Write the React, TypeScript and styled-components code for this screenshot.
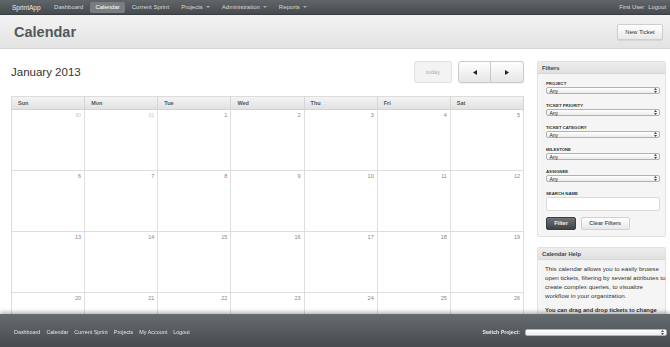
import React from "react";
import styled, { createGlobalStyle, css } from "styled-components";

const GlobalStyle = createGlobalStyle`
  html, body { margin: 0; padding: 0; }
  body {
    font-family: "Liberation Sans", Arial, Helvetica, sans-serif;
    background: #fff;
    color: #333;
    overflow: hidden;
  }
  * { box-sizing: border-box; }
`;

const Page = styled.div`
  min-height: 347px;
`;

/* ---------- Top navigation ---------- */
const NavBar = styled.nav`
  height: 15px;
  display: flex;
  align-items: center;
  padding: 0 4px 0 12px;
  background: linear-gradient(#5f6568, #474b4e);
  border-bottom: 1px solid #3b3e40;
`;

const Brand = styled.span`
  font-size: 6.5px;
  color: #ececec;
  margin-right: 8px;
`;

const NavList = styled.div`
  display: flex;
  align-items: center;
  gap: 1px;
`;

const NavItem = styled.span<{ $active?: boolean; $dropdown?: boolean }>`
  font-size: 6px;
  height: 11px;
  line-height: 11px;
  padding: 0 5.5px;
  border-radius: 2px;
  color: #d8d8d8;
  white-space: nowrap;
  ${(p) =>
    p.$active &&
    css`
      background: #777d80;
      color: #fff;
    `}
  ${(p) =>
    p.$dropdown &&
    css`
      &::after {
        content: "";
        display: inline-block;
        margin-left: 3px;
        vertical-align: middle;
        border-top: 2px solid #a8acae;
        border-left: 2px solid transparent;
        border-right: 2px solid transparent;
      }
    `}
`;

const UserNav = styled.div`
  margin-left: auto;
  display: flex;
  gap: 4px;
`;

const UserLink = styled.span`
  font-size: 5.8px;
  color: #dcdcdc;
`;

/* ---------- Page header ---------- */
const PageHeader = styled.header`
  height: 34px;
  display: flex;
  align-items: center;
  justify-content: space-between;
  padding: 0 7px 0 14px;
  background: linear-gradient(#f3f3f3, #e3e3e3);
  border-bottom: 1px solid #d3d3d3;
`;

const Title = styled.h1`
  margin: 0;
  font-size: 14.5px;
  font-weight: bold;
  color: #53585b;
`;

const LightButton = styled.button<{ $w: number; $h: number }>`
  width: ${(p) => p.$w}px;
  height: ${(p) => p.$h}px;
  padding: 0;
  font-family: inherit;
  font-size: 6px;
  color: #333;
  background: linear-gradient(#ffffff, #e9e9e9);
  border: 1px solid #cfcfcf;
  border-radius: 2px;
  box-shadow: 0 1px 1px rgba(0, 0, 0, 0.07);
  display: flex;
  align-items: center;
  justify-content: center;
`;

/* ---------- Content ---------- */
const Content = styled.div`
  display: grid;
  grid-template-columns: 513px 129px;
  column-gap: 13px;
  padding: 12px 0 0 11px;
  align-items: start;
`;

const MainColumn = styled.section``;

const CalToolbar = styled.div`
  height: 22px;
  display: flex;
  align-items: center;
  margin-bottom: 13px;
`;

const MonthTitle = styled.h2`
  flex: 1;
  margin: 0;
  font-size: 11.5px;
  font-weight: normal;
  color: #333;
`;

const TodayButton = styled.button`
  width: 38px;
  height: 22px;
  margin-right: 6px;
  padding: 0;
  font-family: inherit;
  font-size: 6px;
  color: #b0b0b0;
  background: #f3f3f3;
  border: 1px solid #e0e0e0;
  border-radius: 2px;
`;

const ButtonGroup = styled.div`
  display: flex;
`;

const ArrowButton = styled.button<{ $side: "left" | "right" }>`
  width: 33px;
  height: 22px;
  padding: 0;
  display: flex;
  align-items: center;
  justify-content: center;
  background: linear-gradient(#ffffff, #e6e6e6);
  border: 1px solid #cacaca;
  border-radius: ${(p) => (p.$side === "left" ? "3px 0 0 3px" : "0 3px 3px 0")};
  ${(p) => p.$side === "right" && "border-left: none;"}
  box-shadow: 0 1px 1px rgba(0, 0, 0, 0.06);
`;

const CalendarGrid = styled.div`
  display: grid;
  grid-template-columns: repeat(7, 1fr);
  border-top: 1px solid #dcdcdc;
  border-left: 1px solid #dcdcdc;
`;

const HeadCell = styled.div`
  height: 13px;
  display: flex;
  align-items: center;
  padding-left: 6px;
  font-size: 5.5px;
  font-weight: bold;
  color: #555;
  background: linear-gradient(#f4f4f4, #e2e2e2);
  border-right: 1px solid #d6d6d6;
  border-bottom: 1px solid #d2d2d2;
`;

const DayCell = styled.div<{ $other?: boolean }>`
  height: 61px;
  padding: 2px 3px;
  text-align: right;
  font-size: 5.5px;
  color: ${(p) => (p.$other ? "#c8c8c8" : "#858585")};
  border-right: 1px solid #dedede;
  border-bottom: 1px solid #dedede;
`;

/* ---------- Sidebar ---------- */
const Sidebar = styled.aside`
  display: flex;
  flex-direction: column;
  gap: 10px;
`;

const Panel = styled.div`
  background: #f5f5f5;
  border: 1px solid #e2e2e2;
  border-radius: 2px;
`;

const PanelHeader = styled.div`
  height: 12px;
  display: flex;
  align-items: center;
  padding-left: 4px;
  font-size: 5.8px;
  font-weight: bold;
  color: #444;
  background: linear-gradient(#ededed, #e0e0e0);
  border-bottom: 1px solid #d8d8d8;
`;

const FilterBody = styled.div`
  padding: 7px 5px 6px 8px;
`;

const FieldGroup = styled.div<{ $mb: number }>`
  margin-bottom: ${(p) => p.$mb}px;
`;

const FieldLabel = styled.div`
  font-size: 4.3px;
  line-height: 6px;
  font-weight: bold;
  color: #333;
  text-transform: uppercase;
`;

const SelectBox = styled.div<{ $w?: number }>`
  width: ${(p) => (p.$w ? `${p.$w}px` : "100%")};
  height: 7px;
  display: flex;
  align-items: center;
  justify-content: space-between;
  padding: 0 2px 0 2.5px;
  font-size: 5px;
  color: #222;
  background: linear-gradient(#ffffff, #ececec);
  border: 1px solid #b2b2b2;
  border-radius: 2px;
`;

const TextInput = styled.div`
  height: 13.5px;
  background: #fff;
  border: 1px solid #dadada;
  border-radius: 2px;
`;

const ButtonRow = styled.div`
  display: flex;
  gap: 4.5px;
`;

const DarkButton = styled.button`
  width: 30px;
  height: 13.5px;
  padding: 0;
  font-family: inherit;
  font-size: 5.6px;
  font-weight: bold;
  color: #f2f2f2;
  background: linear-gradient(#6e7376, #3e4245);
  border: 1px solid #3a3d3f;
  border-radius: 2px;
`;

const ClearButton = styled.button`
  width: 49.5px;
  height: 13.5px;
  padding: 0;
  font-family: inherit;
  font-size: 5.5px;
  font-weight: bold;
  color: #555;
  background: linear-gradient(#ffffff, #e8e8e8);
  border: 1px solid #d0d0d0;
  border-radius: 2px;
`;

const HelpBody = styled.div`
  padding: 4px 4px 8px 7px;
  font-size: 6.2px;
  line-height: 9px;
  color: #333;
  white-space: nowrap;
`;

const HelpParagraph = styled.p<{ $bold?: boolean }>`
  margin: 0 0 6px;
  font-weight: ${(p) => (p.$bold ? "bold" : "normal")};
  ${(p) => p.$bold && "font-size: 5.8px;"}
`;

/* ---------- Footer ---------- */
const Footer = styled.footer`
  position: fixed;
  left: 0;
  right: 0;
  bottom: 0;
  height: 33px;
  display: flex;
  align-items: center;
  padding: 3px 3px 0 14px;
  background: linear-gradient(#656c70, #464b4e);
  box-shadow: 0 -2px 4px rgba(0, 0, 0, 0.28);
`;

const FooterLinks = styled.div`
  display: flex;
  gap: 6px;
`;

const FooterLink = styled.span`
  font-size: 5.4px;
  color: #e4e4e4;
`;

const SwitchProject = styled.div`
  margin-left: auto;
  display: flex;
  align-items: center;
  gap: 5px;
`;

const SwitchLabel = styled.span`
  font-size: 5.2px;
  font-weight: bold;
  color: #eaeaea;
`;

/* ---------- Icons ---------- */
const Updown = () => (
  <svg width="3" height="5" viewBox="0 0 3 5">
    <path d="M1.5 0 L3 2 L0 2 Z M0 3 L3 3 L1.5 5 Z" fill="#444" />
  </svg>
);

const Tri = ({ dir }: { dir: "left" | "right" }) => (
  <svg width="4" height="5" viewBox="0 0 4 5">
    {dir === "left" ? (
      <path d="M4 0 L4 5 L0 2.5 Z" fill="#222" />
    ) : (
      <path d="M0 0 L0 5 L4 2.5 Z" fill="#222" />
    )}
  </svg>
);

const days = ["Sun", "Mon", "Tue", "Wed", "Thu", "Fri", "Sat"];

/* Weeks visible in the viewport (Dec 30 – Jan 26) */
const cells: { n: number; other: boolean }[] = [
  { n: 30, other: true },
  { n: 31, other: true },
  ...Array.from({ length: 26 }, (_, i) => ({ n: i + 1, other: false })),
];

const filters = ["Project", "Ticket Priority", "Ticket Category", "Milestone", "Assignee"];

export default function App() {
  return (
    <Page>
      <GlobalStyle />
      <NavBar>
        <Brand>SprintApp</Brand>
        <NavList>
          <NavItem>Dashboard</NavItem>
          <NavItem $active>Calendar</NavItem>
          <NavItem>Current Sprint</NavItem>
          <NavItem $dropdown>Projects</NavItem>
          <NavItem $dropdown>Administration</NavItem>
          <NavItem $dropdown>Reports</NavItem>
        </NavList>
        <UserNav>
          <UserLink>First User</UserLink>
          <UserLink>Logout</UserLink>
        </UserNav>
      </NavBar>

      <PageHeader>
        <Title>Calendar</Title>
        <LightButton $w={46} $h={16}>New Ticket</LightButton>
      </PageHeader>

      <Content>
        <MainColumn>
          <CalToolbar>
            <MonthTitle>January 2013</MonthTitle>
            <TodayButton>today</TodayButton>
            <ButtonGroup>
              <ArrowButton $side="left">
                <Tri dir="left" />
              </ArrowButton>
              <ArrowButton $side="right">
                <Tri dir="right" />
              </ArrowButton>
            </ButtonGroup>
          </CalToolbar>
          <CalendarGrid>
            {days.map((d) => (
              <HeadCell key={d}>{d}</HeadCell>
            ))}
            {cells.map((c, i) => (
              <DayCell key={i} $other={c.other}>
                {c.n}
              </DayCell>
            ))}
          </CalendarGrid>
        </MainColumn>

        <Sidebar>
          <Panel>
            <PanelHeader>Filters</PanelHeader>
            <FilterBody>
              {filters.map((f) => (
                <FieldGroup key={f} $mb={9}>
                  <FieldLabel>{f}</FieldLabel>
                  <SelectBox>
                    <span>Any</span>
                    <Updown />
                  </SelectBox>
                </FieldGroup>
              ))}
              <FieldGroup $mb={6}>
                <FieldLabel>Search Name</FieldLabel>
                <TextInput />
              </FieldGroup>
              <ButtonRow>
                <DarkButton>Filter</DarkButton>
                <ClearButton>Clear Filters</ClearButton>
              </ButtonRow>
            </FilterBody>
          </Panel>

          <Panel>
            <PanelHeader>Calendar Help</PanelHeader>
            <HelpBody>
              <HelpParagraph>
                This calendar allows you to easily browse
                <br />
                open tickets, filtering by several attributes to
                <br />
                create complex queries, to visualize
                <br />
                workflow in your organization.
              </HelpParagraph>
              <HelpParagraph $bold>You can drag and drop tickets to change</HelpParagraph>
            </HelpBody>
          </Panel>
        </Sidebar>
      </Content>

      <Footer>
        <FooterLinks>
          <FooterLink>Dashboard</FooterLink>
          <FooterLink>Calendar</FooterLink>
          <FooterLink>Current Sprint</FooterLink>
          <FooterLink>Projects</FooterLink>
          <FooterLink>My Account</FooterLink>
          <FooterLink>Logout</FooterLink>
        </FooterLinks>
        <SwitchProject>
          <SwitchLabel>Switch Project:</SwitchLabel>
          <SelectBox $w={142}>
            <span />
            <Updown />
          </SelectBox>
        </SwitchProject>
      </Footer>
    </Page>
  );
}
